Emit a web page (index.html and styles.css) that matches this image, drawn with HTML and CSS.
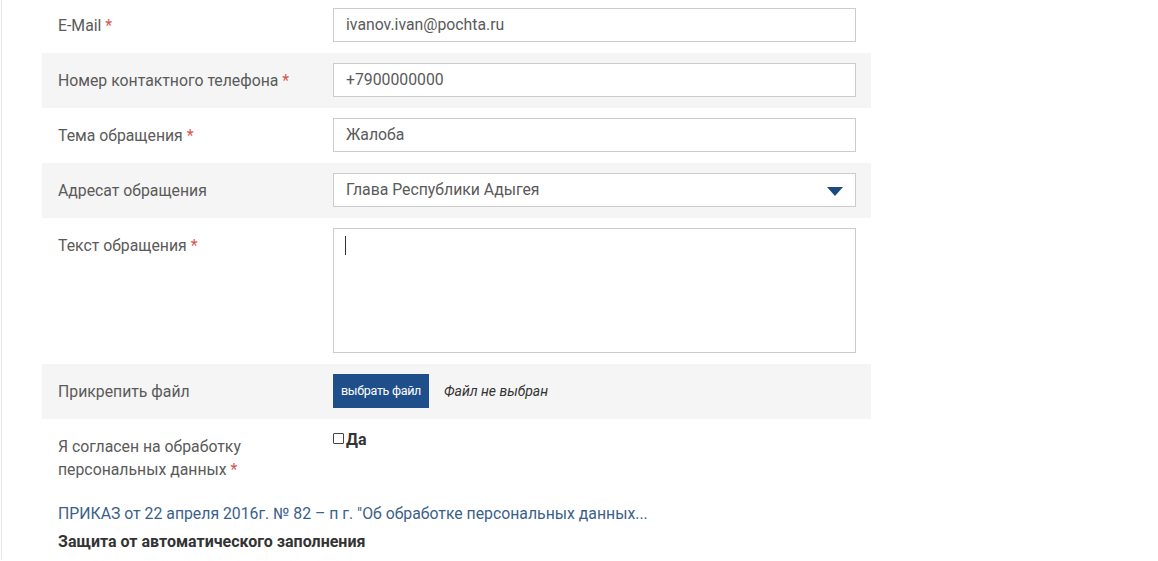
FILE: index.html
```html
<!DOCTYPE html>
<html lang="ru">
<head>
<meta charset="utf-8">
<title>Обращение</title>
<link rel="stylesheet" href="styles.css">
</head>
<body>
<div class="page">
  <form class="form">
    <div class="row">
      <label class="label">E-Mail <span class="req">*</span></label>
      <div class="control"><div class="input">ivanov.ivan@pochta.ru</div></div>
    </div>
    <div class="row alt">
      <label class="label">Номер контактного телефона <span class="req">*</span></label>
      <div class="control"><div class="input">+7900000000</div></div>
    </div>
    <div class="row">
      <label class="label">Тема обращения <span class="req">*</span></label>
      <div class="control"><div class="input">Жалоба</div></div>
    </div>
    <div class="row alt">
      <label class="label">Адресат обращения</label>
      <div class="control">
        <div class="input select">
          <span>Глава Республики Адыгея</span>
          <svg class="arrow" width="16" height="9" viewBox="0 0 16 9"><path d="M0 0H16L8 9Z" fill="#1d4a7c"/></svg>
        </div>
      </div>
    </div>
    <div class="row">
      <label class="label">Текст обращения <span class="req">*</span></label>
      <div class="control"><div class="textarea"><span class="caret"></span></div></div>
    </div>
    <div class="row alt">
      <label class="label">Прикрепить файл</label>
      <div class="control file">
        <span class="file-btn">выбрать файл</span>
        <span class="file-name">Файл не выбран</span>
      </div>
    </div>
    <div class="row">
      <label class="label"><span class="line">Я согласен на обработку</span><span class="line">персональных данных <span class="req">*</span></span></label>
      <div class="control agree">
        <span class="checkbox"></span><b>Да</b>
      </div>
    </div>
    <a class="doc-link" href="#">ПРИКАЗ от 22 апреля 2016г. № 82 – п г. "Об обработке персональных данных...</a>
    <div class="captcha-title">Защита от автоматического заполнения</div>
  </form>
</div>
</body>
</html>
```

FILE: styles.css
```css
html, body {
  margin: 0;
  padding: 0;
  background: #fff;
}

body {
  font-family: Roboto, "Liberation Sans", Arial, sans-serif;
  font-size: 15.8px;
  color: #5a5a5a;
}

.page {
  margin-left: 1px;
  border-left: 1px solid #e6e6e6;
  min-height: 561px;
  padding-left: 40px;
}

.form {
  width: 829px;
  margin-top: -2px;
}

.row {
  display: grid;
  grid-template-columns: 259px 523px;
  column-gap: 16px;
  padding: 10px 15px 11px 16px;
}

.row.alt {
  background: #f5f5f5;
}

.label {
  padding-top: 6px;
  line-height: 23px;
  color: #5a5a5a;
}

.line {
  display: block;
}

.req {
  color: #d9534f;
}

.input {
  box-sizing: border-box;
  height: 34px;
  border: 1px solid #cccccc;
  background: #fff;
  padding: 0 12px;
  line-height: 32px;
  color: #5a5a5a;
}

.select {
  display: flex;
  align-items: center;
  justify-content: space-between;
}

.arrow {
  display: block;
  margin-top: 2px;
}

.textarea {
  box-sizing: border-box;
  height: 125px;
  border: 1px solid #cccccc;
  background: #fff;
  padding: 7px 11px;
}

.caret {
  display: block;
  width: 1px;
  height: 19px;
  background: #333;
}

.file {
  display: flex;
  align-items: center;
  gap: 15px;
}

.file-btn {
  display: inline-block;
  height: 34px;
  line-height: 34px;
  padding: 0 8px;
  background: #1f4f8b;
  color: #fff;
  font-size: 12.5px;
  letter-spacing: -0.3px;
}

.file-name {
  font-style: italic;
  font-size: 14px;
  color: #333;
}

.agree {
  display: flex;
  align-items: flex-start;
  line-height: 22px;
  color: #333;
}

.checkbox {
  display: inline-block;
  box-sizing: border-box;
  width: 11px;
  height: 11px;
  border: 1px solid #444;
  border-radius: 1px;
  margin-top: 4px;
  margin-right: 2px;
}

.agree b {
  font-weight: 700;
  font-size: 16px;
  color: #333;
}

.doc-link {
  display: block;
  margin-top: 11px;
  padding-left: 16px;
  line-height: 22px;
  color: #3b5f8a;
  text-decoration: none;
}

.captcha-title {
  margin-top: 6px;
  padding-left: 16px;
  line-height: 22px;
  font-size: 16px;
  font-weight: 700;
  color: #333;
}
```
